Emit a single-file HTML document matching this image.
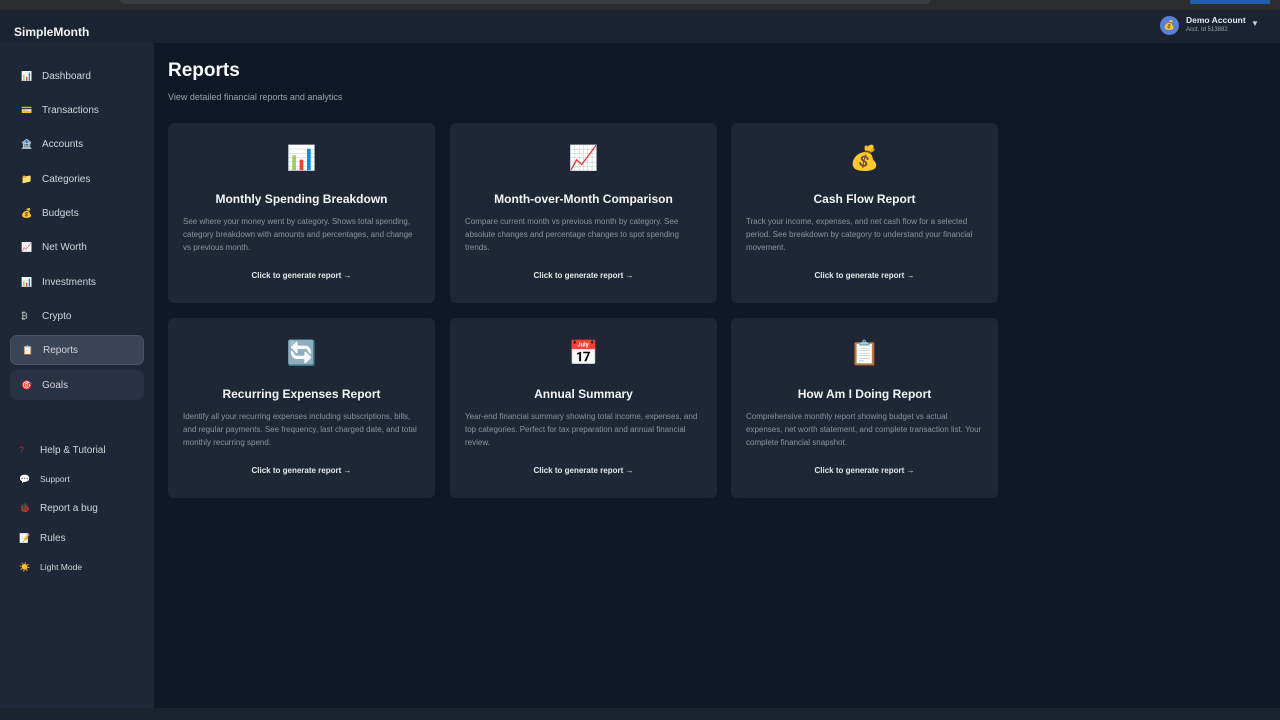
<!DOCTYPE html>
<html><head><meta charset="utf-8"><style>
*{margin:0;padding:0;box-sizing:border-box}
body{width:1280px;height:720px;overflow:hidden;background:#101726;font-family:"Liberation Sans",sans-serif;color:#e5e7eb;position:relative}
.top{position:absolute;left:0;top:0;width:1280px;height:10px;background:#2b2d31}
.top .b{position:absolute;left:120px;top:0;width:810px;height:4px;background:#3b3d42;border-radius:0 0 4px 4px}
.top .c{position:absolute;left:1190px;top:0;width:80px;height:4px;background:#1f5fae}
.hdr{position:absolute;left:0;top:10px;width:1280px;height:33px;background:#1b2333}
.logo{position:absolute;left:14px;top:25px;font-size:12px;font-weight:bold;color:#f3f4f6}
.side{position:absolute;left:0;top:43px;width:154px;height:665px;background:#1e2738}
.bot{position:absolute;left:0;top:708px;width:1280px;height:12px;background:#1b2230}
.nav{position:absolute;left:10px;width:134px;height:30px;display:flex;align-items:center;font-size:10px;color:#d1d5db}
.nav i{font-style:normal;width:22px;padding-left:11px;font-size:9px;margin-right:10px}
.nav.act{background:#3a4457;border-radius:7px;border:1px solid #4b5568}
.nav.hov{background:#283245;border-radius:7px}
.sm{font-size:8.5px}
h1{position:absolute;left:168px;top:60px;font-size:19px;color:#f9fafb}
.sub{position:absolute;left:168px;top:92px;font-size:9px;color:#9ca3af}
.card{position:absolute;width:267px;height:180px;background:#1f2736;border-radius:6px;text-align:center}
.card .ic{font-size:24px;margin-top:20px;height:32px;line-height:32px}
.card h3{font-size:12px;margin-top:17px;color:#f3f4f6}
.card p{font-size:8px;color:#8b93a1;text-align:left;padding:0 15px;margin-top:9px;line-height:13px;height:42px}
.card .g{font-size:8px;font-weight:bold;color:#e5e7eb;margin-top:14px}
.acct{position:absolute;left:1160px;top:16px;width:19px;height:19px;border-radius:50%;background:#5b7fd6;font-size:9px;text-align:center;line-height:19px}
</style></head><body>
<div class="top"><div class="b"></div><div class="c"></div></div>
<div class="hdr"></div>
<div class="logo">SimpleMonth</div>
<div class="acct">💰</div>
<div style="position:absolute;left:1186px;top:15px;font-size:8.5px;font-weight:bold">Demo Account</div>
<div style="position:absolute;left:1186px;top:27px;font-size:6px;color:#9ca3af">Acct. Id 513882</div>
<div style="position:absolute;left:1251px;top:19px;font-size:8px;color:#cbd5e1">▼</div>
<div class="side"></div>
<div class="nav" style="top:61px"><i>📊</i>Dashboard</div>
<div class="nav" style="top:95px"><i>💳</i>Transactions</div>
<div class="nav" style="top:129px"><i>🏦</i>Accounts</div>
<div class="nav" style="top:164px"><i>📁</i>Categories</div>
<div class="nav" style="top:198px"><i>💰</i>Budgets</div>
<div class="nav" style="top:232px"><i>📈</i>Net Worth</div>
<div class="nav" style="top:267px"><i>📊</i>Investments</div>
<div class="nav" style="top:301px"><i>₿</i>Crypto</div>
<div class="nav act" style="top:335px"><i>📋</i>Reports</div>
<div class="nav hov" style="top:370px"><i>🎯</i>Goals</div>
<div class="nav" style="top:435px;left:8px"><i style="color:#dc2626">?</i>Help &amp; Tutorial</div>
<div class="nav sm" style="top:464px;left:8px"><i>💬</i>Support</div>
<div class="nav" style="top:493px;left:8px"><i>🐞</i>Report a bug</div>
<div class="nav" style="top:523px;left:8px"><i>📝</i>Rules</div>
<div class="nav sm" style="top:552px;left:8px"><i>☀️</i>Light Mode</div>
<div class="bot"></div>
<h1>Reports</h1>
<div class="sub">View detailed financial reports and analytics</div>

<div class="card" style="left:168px;top:123px"><div class="ic">📊</div><h3>Monthly Spending Breakdown</h3><p>See where your money went by category. Shows total spending, category breakdown with amounts and percentages, and change vs previous month.</p><div class="g">Click to generate report →</div></div>
<div class="card" style="left:450px;top:123px"><div class="ic">📈</div><h3>Month-over-Month Comparison</h3><p>Compare current month vs previous month by category. See absolute changes and percentage changes to spot spending trends.</p><div class="g">Click to generate report →</div></div>
<div class="card" style="left:731px;top:123px"><div class="ic">💰</div><h3>Cash Flow Report</h3><p>Track your income, expenses, and net cash flow for a selected period. See breakdown by category to understand your financial movement.</p><div class="g">Click to generate report →</div></div>
<div class="card" style="left:168px;top:318px"><div class="ic">🔄</div><h3>Recurring Expenses Report</h3><p>Identify all your recurring expenses including subscriptions, bills, and regular payments. See frequency, last charged date, and total monthly recurring spend.</p><div class="g">Click to generate report →</div></div>
<div class="card" style="left:450px;top:318px"><div class="ic">📅</div><h3>Annual Summary</h3><p>Year-end financial summary showing total income, expenses, and top categories. Perfect for tax preparation and annual financial review.</p><div class="g">Click to generate report →</div></div>
<div class="card" style="left:731px;top:318px"><div class="ic">📋</div><h3>How Am I Doing Report</h3><p>Comprehensive monthly report showing budget vs actual expenses, net worth statement, and complete transaction list. Your complete financial snapshot.</p><div class="g">Click to generate report →</div></div>
</body></html>
